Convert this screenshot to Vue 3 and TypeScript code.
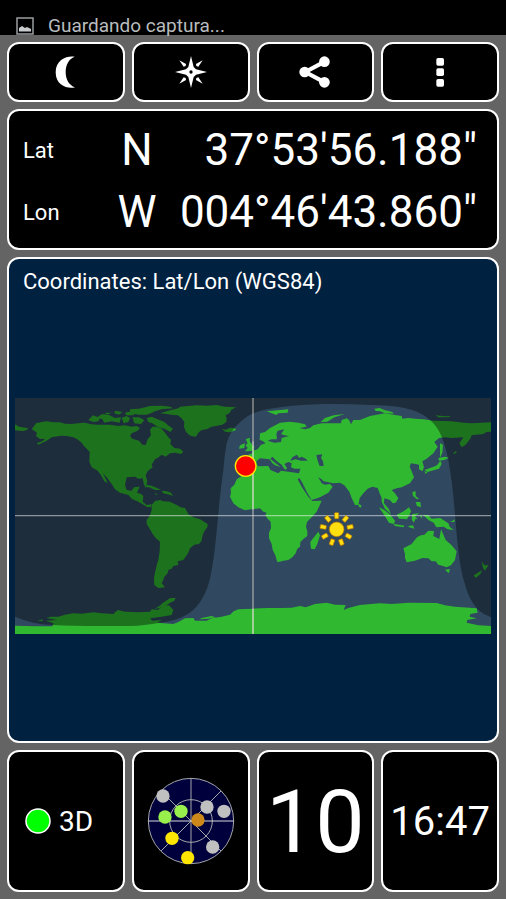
<script setup lang="ts">
interface Coordinate {
  label: string
  hemisphere: string
  value: string
}

interface Satellite {
  x: number
  y: number
  color: string
}

const coordinates: Coordinate[] = [
  { label: 'Lat', hemisphere: 'N', value: '37°53\'56.188"' },
  { label: 'Lon', hemisphere: 'W', value: '004°46\'43.860"' },
]

const satellites: Satellite[] = [
  { x: 48, y: 57, color: '#c0c0c0' },
  { x: 180, y: 90, color: '#c0c0c0' },
  { x: 231, y: 103, color: '#c0c0c0' },
  { x: 197, y: 210, color: '#c0c0c0' },
  { x: 102, y: 103, color: '#99f04c' },
  { x: 54, y: 120, color: '#99f04c' },
  { x: 153, y: 129, color: '#cc8818' },
  { x: 75, y: 184, color: '#ffe600' },
  { x: 122, y: 242, color: '#ffe600' },
]

const sunRays: number[] = Array.from({ length: 9 }, (_, i) => i * 40)

// Land outlines on an equirectangular grid of 1428 x 708 units.
const land: string[] = [
  // North and Central America
  '50,94 63,76 80,72 95,70 115,73 135,73 150,77 170,78 190,76 210,74 228,79 250,80 285,80 310,84 330,82 350,86 365,84 375,90 368,98 350,106 345,114 352,122 372,128 382,140 392,141 398,124 408,112 405,96 412,86 425,86 440,92 450,104 462,120 468,125 466,138 478,150 495,152 505,161 498,168 480,164 465,166 452,176 440,170 428,180 420,184 410,200 413,208 398,220 392,232 397,250 393,266 387,261 383,241 370,242 360,236 335,238 330,261 335,276 350,278 357,268 374,266 366,284 378,288 385,294 383,311 395,321 410,319 408,326 398,328 388,322 370,311 350,302 340,291 315,284 300,274 290,258 275,238 264,226 272,242 278,256 268,250 257,230 248,218 230,208 223,191 224,161 215,152 207,144 200,134 193,128 184,122 175,118 155,114 140,113 120,116 110,118 95,128 70,140 65,136 82,130 90,123 74,122 63,114 66,104 58,98',
  // Canadian Arctic islands
  '220,66 234,52 255,60 250,70 235,72',
  '246,58 262,48 284,52 300,60 318,58 314,74 290,70 268,74 262,64',
  '270,44 290,44 276,50', '300,38 322,42 312,50 298,46',
  '320,60 334,54 345,60 340,72 326,76', '330,44 350,40 368,44 352,52 334,52',
  '352,58 372,58 388,66 378,78 358,76', '395,60 410,56 428,64 448,72 462,84 474,92 466,102 448,92 430,88 412,76 400,72',
  '345,34 372,32 405,24 440,23 465,26 475,31 440,34 420,40 408,46 395,50 370,50 345,44',
  // Greenland and Iceland
  '435,46 460,38 490,31 495,26 545,22 575,23 605,21 630,26 663,28 648,36 645,44 632,52 635,61 634,72 622,80 590,86 575,94 560,96 550,104 543,116 528,114 520,109 512,100 507,86 508,72 500,61 488,52 475,51 455,48',
  '620,93 632,95 645,89 660,91 663,96 645,103 632,102',
  // Caribbean
  '388,268 396,260 412,264 426,270 438,276 420,276 402,268', '440,278 456,280 468,284 474,294 464,290 444,286',
  '418,286 428,288 424,291',
  // South America
  '410,321 420,309 435,306 445,310 465,311 485,321 497,328 510,330 520,348 535,358 555,364 578,378 577,388 568,400 563,411 560,428 552,438 538,440 525,451 520,464 505,486 488,490 490,501 475,504 470,512 460,516 458,526 448,536 444,548 440,556 450,568 430,570 418,561 417,540 421,520 426,498 430,486 434,460 435,431 422,420 413,408 404,392 395,378 395,366 405,352 410,336',
  // Africa, Europe and Asia
  '680,234 665,244 658,260 647,271 648,286 645,296 655,316 670,328 690,337 713,333 735,331 745,341 755,344 751,351 758,362 767,371 768,390 762,404 762,421 770,438 773,456 781,472 785,486 788,493 805,488 820,486 832,478 842,466 847,452 855,446 856,432 866,422 877,414 877,400 873,386 876,372 890,358 905,341 912,326 920,308 892,309 880,296 868,278 860,266 848,244 853,240 862,254 875,281 890,306 915,298 940,284 953,266 945,258 930,260 920,256 910,238 918,242 926,250 955,256 975,254 988,262 1003,281 1010,300 1020,321 1030,321 1034,300 1045,286 1058,272 1072,266 1088,270 1094,286 1100,300 1100,311 1110,332 1127,348 1121,332 1107,316 1108,301 1125,306 1133,316 1142,314 1150,301 1140,286 1130,276 1145,271 1160,268 1185,256 1197,238 1190,220 1184,206 1188,196 1202,198 1212,200 1212,214 1222,220 1227,208 1222,190 1235,182 1255,166 1268,146 1258,132 1272,120 1290,118 1310,120 1345,118 1333,136 1340,148 1352,140 1366,122 1370,112 1405,108 1414,102 1428,101 1428,73 1400,74 1370,76 1345,74 1310,70 1255,68 1225,64 1200,62 1180,60 1162,62 1160,54 1135,50 1110,46 1085,50 1065,54 1035,66 1015,66 1008,79 1002,66 995,61 980,66 978,76 950,76 920,76 895,82 885,90 870,94 854,90 875,86 870,79 850,74 825,71 795,74 765,90 750,102 735,106 734,126 742,128 752,136 738,140 728,154 714,158 712,166 700,170 705,180 704,188 682,192 679,214 688,220 692,228',
  // British Isles
  '692,124 705,119 704,130 712,140 718,148 714,158 690,160 698,150 692,142 698,136', '675,142 690,136 688,150 672,152',
  // Arctic islands of Eurasia
  '755,40 820,34 818,44 790,46 784,51', '917,72 930,60 956,52 990,48 958,58 937,71',
  '1078,32 1094,30 1108,36 1132,42 1136,47 1110,46 1096,40 1082,39', '1262,52 1290,55 1308,54 1300,58 1270,58',
  // Eastern tip of Siberia across the date line
  '0,79 12,86 40,91 34,97 22,99 0,97',
  // Kurils, Sakhalin, Japan
  '1275,136 1284,140 1282,164 1275,180', '1270,180 1290,176 1302,179 1288,186 1272,188', '1314,166 1322,160 1326,162 1318,168',
  '1276,188 1280,198 1272,212 1250,218 1238,222 1228,216 1252,208 1266,202', '1228,220 1238,222 1232,228',
  // South-East Asia
  '1192,282 1202,280 1202,294 1212,302 1206,304 1194,294', '1202,312 1216,312 1218,328 1206,324', '1134,250 1142,248 1138,256',
  '1145,350 1166,340 1182,328 1188,338 1184,350 1176,364 1152,362',
  '1092,328 1108,336 1126,350 1140,368 1137,378 1122,374 1108,352', '1135,378 1152,380 1168,383 1166,388 1140,384',
  '1192,348 1214,346 1200,354 1208,364 1202,362 1196,374 1190,364', '1180,384 1194,382 1198,392 1182,388', '1218,348 1222,362 1216,356',
  '1224,350 1240,352 1250,362 1276,360 1300,376 1304,386 1316,396 1298,394 1286,386 1264,388 1256,374 1240,366',
  '1306,372 1320,364 1318,372', '1030,317 1039,322 1038,329 1031,326',
  // Australia and New Zealand
  '1165,451 1190,438 1206,418 1218,412 1228,410 1240,398 1257,399 1255,414 1273,423 1278,394 1286,412 1292,426 1310,442 1325,460 1320,486 1308,502 1295,508 1284,504 1270,500 1262,490 1250,490 1240,481 1222,480 1200,488 1175,493 1170,480 1170,468',
  '1290,515 1305,513 1301,526', '1400,490 1408,502 1420,502 1410,518 1404,510', '1402,516 1396,528 1382,540 1376,532',
  // Madagascar
  '910,401 915,412 907,438 899,454 888,452 886,432 895,420',
  // Antarctica
  '0,683 60,685 112,685 116,676 92,668 126,666 94,660 108,656 130,656 150,650 175,646 200,647 235,643 260,646 295,648 308,636 330,641 370,643 405,641 410,634 428,636 445,622 462,622 475,636 470,651 440,656 405,661 412,668 440,666 428,674 475,678 490,672 510,661 535,660 540,668 575,668 590,661 620,656 645,650 656,640 670,634 713,632 760,630 800,630 830,629 855,624 872,628 900,618 935,614 960,620 992,621 986,636 1000,630 1035,621 1060,619 1095,616 1130,618 1180,614 1265,615 1290,622 1320,626 1385,631 1388,644 1366,648 1364,656 1385,661 1357,666 1355,674 1390,682 1428,684 1428,708 0,708',
  '418,634 436,622 444,614 466,600 482,600 478,608 466,614 456,620 440,628', '554,664 580,662 602,658 590,654 560,660', '68,668 84,664 82,670',
]

const inlandSeas: string[] = [
  // Mediterranean
  '724,190 735,181 764,184 772,196 780,202 798,208 780,194 766,182 772,176 786,190 800,200 806,210 812,216 816,210 808,198 820,192 830,196 828,208 838,212 856,212 852,226 826,222 798,218 790,226 766,216 760,204 728,205',
  // Black Sea, Caspian, Baltic
  '826,188 832,178 846,170 852,180 860,176 872,182 878,188 858,188 842,184',
  '904,171 922,169 918,180 924,190 926,204 914,204 908,188',
  '788,98 808,94 798,108 808,112 822,114 800,120 798,132 778,134 758,128 770,124 786,124 784,108',
]
</script>

<template>
  <div class="screen">
    <header class="status">
      <svg class="status-icon" viewBox="0 0 18 18" aria-hidden="true">
        <rect x="1" y="1" width="16" height="16" fill="none" stroke="#9a9ea0" stroke-width="1.5" />
        <path d="M3 14.5V11l3-2 3 2 2-1 4 2v2.500z" fill="#c8cccf" />
      </svg>
      <span>Guardando captura...</span>
    </header>

    <main class="board">
      <nav class="row">
        <button class="tile" type="button" aria-label="Night mode">
          <svg class="glyph" viewBox="0 0 96 96">
            <path d="M74 2C54-2 17 8 17 49s38 51 58 45C57 88 47 70 47 48S57 8 74 2z" />
          </svg>
        </button>
        <button class="tile" type="button" aria-label="Compass">
          <svg class="glyph" viewBox="0 0 96 96">
            <path d="M48 0l8 33 7 7 33 8-33 8-7 7-8 33-8-33-7-7-33-8 33-8 7-7z" />
            <path d="M13 13l20 11-1 6-6 2zM83 13L63 24l1 6 6 2zM13 83l20-11-1-6-6-2zM83 83L63 72l1-6 6-2z" />
            <circle cx="48" cy="48" r="5" fill="#000" />
          </svg>
        </button>
        <button class="tile" type="button" aria-label="Share">
          <svg class="glyph" viewBox="0 0 102 102">
            <path d="M82 18L20 51l62 33" fill="none" stroke="#fff" stroke-width="13" />
            <circle cx="81" cy="18" r="17" />
            <circle cx="18" cy="51" r="17" />
            <circle cx="81" cy="84" r="17" />
          </svg>
        </button>
        <button class="tile" type="button" aria-label="More options">
          <svg class="glyph" viewBox="0 0 96 96">
            <rect x="37" y="6" width="23" height="23" rx="5" />
            <rect x="37" y="37" width="23" height="23" rx="5" />
            <rect x="37" y="69" width="23" height="23" rx="5" />
          </svg>
        </button>
      </nav>

      <section class="tile position">
        <div v-for="c in coordinates" :key="c.label" class="coordinate">
          <span class="label">{{ c.label }}</span>
          <span class="hemisphere">{{ c.hemisphere }}</span>
          <span class="value">{{ c.value }}</span>
        </div>
      </section>

      <section class="tile world">
        <h1 class="title">Coordinates: Lat/Lon (WGS84)</h1>
        <div class="map-area">
          <svg class="map" viewBox="0 0 1428 708" role="img" aria-label="World map">
            <rect width="1428" height="708" fill="#304960" />
            <g fill="#30b830">
              <polygon v-for="(p, i) in land" :key="i" :points="p" />
            </g>
            <g fill="#304960">
              <polygon v-for="(p, i) in inlandSeas" :key="i" :points="p" />
            </g>
            <path
              class="night"
              d="M0 0H1428V658Q1405 650 1390 636Q1366 610 1355 576Q1341 536 1335 496Q1326 430 1320 351Q1313 260 1300 186Q1292 145 1280 116Q1268 86 1245 66Q1215 38 1165 29Q1120 22 1065 21Q1000 17 925 18Q860 20 805 26Q750 32 715 46Q695 54 680 68Q662 82 650 101Q640 116 635 136Q628 174 625 216Q618 265 613 316Q608 370 602 430Q597 480 590 516Q584 556 570 586Q557 615 535 636Q515 653 485 664Q460 672 425 676Q390 683 345 684H285Q190 685 113 681Q80 679 55 674Q25 667 0 656Z"
            />
            <path d="M0 353H1428" stroke="#fff" stroke-opacity=".5" stroke-width="4" />
            <path d="M714 0V708" stroke="#e8dccd" stroke-opacity=".5" stroke-width="5" />
            <path d="M714 130V335M714 632V708" stroke="#f0e0e8" stroke-opacity=".4" stroke-width="5" />
            <g fill="#ffdf10" stroke="#c07800" stroke-width="2">
              <circle cx="965" cy="394" r="22" />
              <rect
                v-for="a in sunRays"
                :key="a"
                x="959"
                y="344"
                width="12"
                height="18"
                rx="2"
                :transform="`rotate(${a} 965 394)`"
              />
            </g>
            <circle cx="692" cy="204" r="31" fill="#f00" stroke="#ffe600" stroke-width="4" />
          </svg>
        </div>
      </section>

      <section class="row bottom">
        <div class="tile fix">
          <svg class="lamp" viewBox="0 0 26 26" aria-hidden="true">
            <circle cx="13" cy="13" r="12" fill="#0f0" stroke="#fff" stroke-width="1.500" />
          </svg>
          <span>3D</span>
        </div>
        <div class="tile">
          <svg class="sky" viewBox="0 0 264 264" role="img" aria-label="Satellites in view">
            <circle cx="132" cy="132" r="128" fill="#00003c" />
            <g fill="none" stroke="#a6a8aa" stroke-width="3">
              <circle cx="132" cy="132" r="128" />
              <circle cx="132" cy="132" r="64" />
              <path d="M132 4V260M42 42L222 222M42 222L222 42" />
              <path d="M4 132H260" stroke="#d8d8dc" />
            </g>
            <circle v-for="(s, i) in satellites" :key="i" :cx="s.x" :cy="s.y" r="20" :fill="s.color" />
          </svg>
        </div>
        <div class="tile count">10</div>
        <time class="tile clock">16:47</time>
      </section>
    </main>
  </div>
</template>

<style>
body {
  margin: 0;
  background: #646464;
}
</style>

<style scoped>
.screen {
  display: flex;
  flex-direction: column;
  min-height: 100vh;
  background: #646464;
  color: #fff;
  font-family: Roboto, "Liberation Sans", sans-serif;
}

.status {
  display: flex;
  box-sizing: border-box;
  height: 35px;
  align-items: flex-end;
  gap: 14px;
  padding-left: 16px;
  background: #000;
  color: #b8bcbe;
  font-size: 19px;
  line-height: 18px;
}

.status-icon {
  width: 18px;
  height: 18px;
}

.board {
  display: flex;
  flex: 1;
  flex-direction: column;
  gap: 7px;
  padding: 7px;
}

.row {
  display: grid;
  grid-template-columns: repeat(4, 1fr);
  grid-auto-rows: 60px;
  gap: 7px;
}

.bottom {
  grid-auto-rows: 142px;
}

.tile {
  display: flex;
  box-sizing: border-box;
  align-items: center;
  justify-content: center;
  min-width: 0;
  padding: 0;
  border: 2px solid #fff;
  border-radius: 12px;
  background: #000;
  color: #fff;
  font-family: inherit;
}

.glyph {
  width: 32px;
  height: 32px;
  fill: #fff;
}

.position {
  flex-direction: column;
  align-items: stretch;
  height: 141px;
  padding: 3px 20px 0 14px;
}

.coordinate {
  display: grid;
  grid-template-columns: 80px 68px 1fr;
  align-items: center;
  height: 62px;
  font-size: 44px;
  white-space: nowrap;
}

.label {
  font-size: 22px;
}

.hemisphere {
  text-align: center;
}

.value {
  text-align: right;
}

.world {
  flex: 1;
  flex-direction: column;
  align-items: stretch;
  justify-content: flex-start;
  padding: 0 6px;
  background: #00213f;
}

.title {
  margin: 0;
  padding: 10px 8px 0;
  font-size: 22px;
  font-weight: 400;
  line-height: 26px;
}

.map-area {
  display: flex;
  flex: 1;
  align-items: center;
  padding-bottom: 5px;
}

.map {
  display: block;
  width: 100%;
}

.night {
  fill: #000;
  fill-opacity: 0.38;
}

.fix {
  justify-content: flex-start;
  gap: 8px;
  padding-left: 16px;
  font-size: 28px;
}

.lamp {
  width: 26px;
  height: 26px;
}

.sky {
  width: 88px;
  height: 88px;
}

.count {
  font-size: 88px;
}

.clock {
  font-size: 40px;
}
</style>
